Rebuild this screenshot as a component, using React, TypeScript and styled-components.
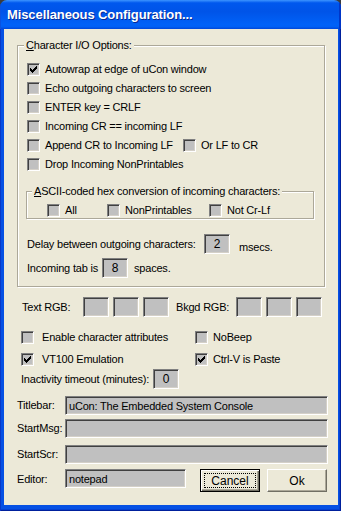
import React from 'react';
import styled, { createGlobalStyle, css } from 'styled-components';

const GlobalStyle = createGlobalStyle`
  html, body { margin: 0; padding: 0; background: #3c3c3c; }
  body { font-family: "Liberation Sans", Arial, sans-serif; }
`;

const bevel = css`
  box-sizing: border-box;
  background: #c0c0c0;
  border-top: 1px solid #808080;
  border-left: 1px solid #808080;
  border-right: 1px solid #fff;
  border-bottom: 1px solid #fff;
  box-shadow: inset 1px 1px #404040, inset -1px -1px #d4d0c8;
`;

const Window = styled.div`
  width: 341px;
  height: 511px;
  display: flex;
  flex-direction: column;
  border-radius: 7px 7px 0 0;
  overflow: hidden;
  font: 11px "Liberation Sans", Arial, sans-serif;
  letter-spacing: -0.2px;
  color: #000;
`;

const TitleBar = styled.div`
  height: 29px;
  flex: none;
  display: flex;
  align-items: center;
  padding: 0 0 1px 7px;
  box-sizing: border-box;
  background: linear-gradient(180deg, #3d95ff, #0058ee 10%, #0054e8 40%, #0062f8 85%, #0060f5 92%, #0047d8 100%);
  box-shadow: inset -2px 0 #0036c8, inset 1px 0 #0a52e0;
  color: #fff;
  font-weight: bold;
  font-size: 13px;
  letter-spacing: -0.1px;
  text-shadow: 1px 1px #0a2a94;
`;

const Frame = styled.div`
  flex: 1;
  display: flex;
  padding: 0 3px 6px 4px;
  background: #0550e4;
  box-shadow: inset 1px 0 #0838c8, inset -1px -1px #00209c, inset -2px -2px #0440d2;
`;

const Client = styled.div`
  flex: 1;
  display: flex;
  flex-direction: column;
  background: #ece9d8;
  padding: 10px 0 0 13px;
`;

const Group = styled.fieldset<{ $w: number; $ml?: number }>`
  margin: 0 0 0 ${(p) => p.$ml ?? 0}px;
  padding: 0;
  width: ${(p) => p.$w}px;
  box-sizing: border-box;
  min-inline-size: 0;
  border: 1px solid #aca899;
  box-shadow: inset 1px 1px #fff, 1px 1px #fff;
`;

const Legend = styled.legend<{ $ml: number }>`
  margin-left: ${(p) => p.$ml}px;
  padding: 0 2px;
  line-height: 13px;
  background: #ece9d8;
`;

const GroupBody = styled.div<{ $pad: string }>`
  display: flex;
  flex-direction: column;
  padding: ${(p) => p.$pad};
`;

const Row = styled.div<{ $h?: number; $mt?: number; $pl?: number; $top?: boolean }>`
  display: flex;
  align-items: ${(p) => (p.$top ? 'flex-start' : 'center')};
  height: ${(p) => p.$h ?? 19}px;
  margin-top: ${(p) => p.$mt ?? 0}px;
  padding-left: ${(p) => p.$pl ?? 0}px;
  flex: none;
`;

const Item = styled.div<{ $w?: number }>`
  display: flex;
  align-items: center;
  ${(p) => (p.$w ? `width: ${p.$w}px;` : '')}
  flex: none;
`;

const Box = styled.span`
  ${bevel};
  width: 13px;
  height: 13px;
  flex: none;
  display: block;
`;

const Mark = styled.svg`
  display: block;
  margin: 2px;
`;

const Text = styled.span<{ $gap?: number; $w?: number; $mt?: number }>`
  margin-left: ${(p) => p.$gap ?? 0}px;
  margin-top: ${(p) => p.$mt ?? 0}px;
  ${(p) => (p.$w ? `width: ${p.$w}px;` : '')}
  line-height: 13px;
  white-space: nowrap;
  flex: none;
`;

const Field = styled.div<{ $w: number; $h?: number; $center?: boolean; $ml?: number }>`
  ${bevel};
  width: ${(p) => p.$w}px;
  height: ${(p) => p.$h ?? 20}px;
  margin-left: ${(p) => p.$ml ?? 0}px;
  flex: none;
  display: flex;
  align-items: center;
  justify-content: ${(p) => (p.$center ? 'center' : 'flex-start')};
  padding-left: ${(p) => (p.$center ? 0 : 3)}px;
  font-size: ${(p) => (p.$center ? 12 : 11)}px;
  white-space: nowrap;
`;

const Button = styled.div<{ $default?: boolean; $ml?: number }>`
  width: 60px;
  height: 23px;
  box-sizing: border-box;
  margin-left: ${(p) => p.$ml ?? 0}px;
  display: flex;
  align-items: center;
  justify-content: center;
  background: #ece9d8;
  border: 1px solid;
  border-color: #fff #716f64 #716f64 #fff;
  box-shadow: inset -1px -1px #aca899;
  font-size: 12px;
  letter-spacing: 0;
  flex: none;
  ${(p) =>
    p.$default &&
    css`
      border-color: #000;
      padding: 3px;
      box-shadow: inset 1px 1px #fff, inset -1px -1px #716f64, inset -2px -2px #aca899;
    `}
`;

const FocusRect = styled.span`
  flex: 1;
  align-self: stretch;
  display: flex;
  align-items: center;
  justify-content: center;
  border: 1px dotted #000;
`;

const CHECK =
  'M6 0h1v1h-1z M5 1h2v1h-2z M0 2h1v1h-1z M4 2h3v1h-3z M0 3h2v1h-2z M3 3h3v1h-3z M0 4h5v1h-5z M1 5h3v1h-3z M2 6h1v1h-1z';

const Check = ({ label, checked, gap = 5, w }: { label: React.ReactNode; checked?: boolean; gap?: number; w?: number }) => (
  <Item $w={w}>
    <Box>
      {checked && (
        <Mark width="7" height="7" viewBox="0 0 7 7" shapeRendering="crispEdges">
          <path d={CHECK} fill="#000" />
        </Mark>
      )}
    </Box>
    <Text $gap={gap}>{label}</Text>
  </Item>
);

export default function App() {
  return (
    <>
      <GlobalStyle />
      <Window>
        <TitleBar>Miscellaneous Configuration...</TitleBar>
        <Frame>
          <Client>
            <Group $w={308}>
              <Legend $ml={6}>
                <u>C</u>haracter I/O Options:
              </Legend>
              <GroupBody $pad="8px 0 8px 9px">
                <Row>
                  <Check checked label="Autowrap at edge of uCon window" />
                </Row>
                <Row>
                  <Check label="Echo outgoing characters to screen" />
                </Row>
                <Row>
                  <Check label="ENTER key = CRLF" />
                </Row>
                <Row>
                  <Check label="Incoming CR == incoming LF" />
                </Row>
                <Row>
                  <Check w={156} label="Append CR to Incoming LF" />
                  <Check label="Or LF to CR" />
                </Row>
                <Row>
                  <Check label="Drop Incoming NonPrintables" />
                </Row>

                <Row $h={0} $mt={11} />
                <Group $w={288} $ml={-1}>
                  <Legend $ml={5}>
                    <u>A</u>SCII-coded hex conversion of incoming characters:
                  </Legend>
                  <GroupBody $pad="5px 0 0 20px">
                    <Row $h={15}>
                      <Check w={60} label="All" />
                      <Check w={102} label="NonPrintables" />
                      <Check label="Not Cr-Lf" />
                    </Row>
                  </GroupBody>
                </Group>

                <Row $h={20} $mt={15}>
                  <Text $w={177}>Delay between outgoing characters:</Text>
                  <Field $w={26} $center>2</Field>
                  <Text $gap={9} $mt={6}>msecs.</Text>
                </Row>
                <Row $h={20} $mt={4}>
                  <Text $w={75}>Incoming tab is</Text>
                  <Field $w={26} $center>8</Field>
                  <Text $gap={6} $mt={1}>spaces.</Text>
                </Row>
              </GroupBody>
            </Group>

            <Row $h={20} $mt={10} $pl={5}>
              <Text $w={61}>Text RGB:</Text>
              <Field $w={26} />
              <Field $w={26} $ml={4} />
              <Field $w={26} $ml={4} />
              <Text $gap={7} $w={60}>Bkgd RGB:</Text>
              <Field $w={26} />
              <Field $w={26} $ml={4} />
              <Field $w={26} $ml={4} />
            </Row>

            <Row $mt={11} $pl={4}>
              <Check w={174} gap={8} label="Enable character attributes" />
              <Check label="NoBeep" />
            </Row>
            <Row $mt={3} $pl={4}>
              <Check w={174} gap={8} checked label="VT100 Emulation" />
              <Check checked label="Ctrl-V is Paste" />
            </Row>
            <Row $h={20} $pl={4}>
              <Text $w={132}>Inactivity timeout (minutes):</Text>
              <Field $w={26} $center>0</Field>
            </Row>

            <Row $mt={7}>
              <Text $w={48}>Titlebar:</Text>
              <Field $w={263} $h={19}>uCon: The Embedded System Console</Field>
            </Row>
            <Row $mt={4}>
              <Text $w={48}>StartMsg:</Text>
              <Field $w={263} $h={19} />
            </Row>
            <Row $mt={7}>
              <Text $w={48}>StartScr:</Text>
              <Field $w={263} $h={19} />
            </Row>
            <Row $mt={5} $h={23} $top>
              <Text $w={48} $mt={4}>Editor:</Text>
              <Field $w={121} $h={19}>notepad</Field>
              <Button $default $ml={14}>
                <FocusRect>Cancel</FocusRect>
              </Button>
              <Button $ml={7}>Ok</Button>
            </Row>
          </Client>
        </Frame>
      </Window>
    </>
  );
}
